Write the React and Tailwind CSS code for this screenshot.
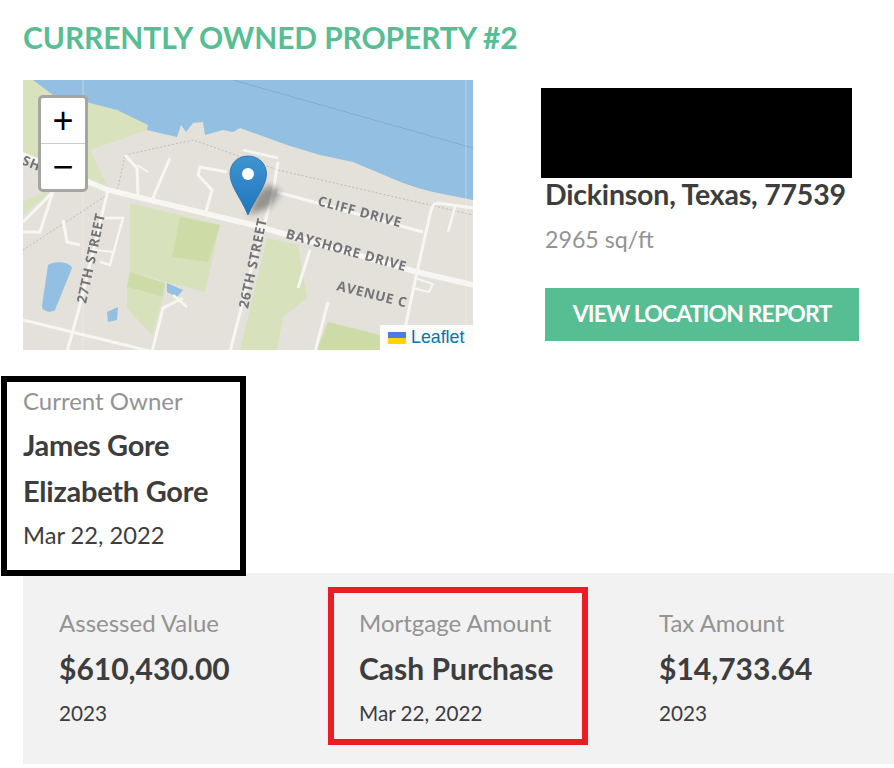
const roads = [
  ["M-5 73L85 110L230 145L394 192L455 206", 5.500],
  ["M254 112L400 152", 3],
  ["M450 128L415 123Q410 123 408 130L394 192L377 272", 3],
  ["M432 127L425 152", 2.500],
  ["M255 82L250 112L242 142L230 182L207 272", 3],
  ["M220 70L255 78", 2.500],
  ["M204 92L177 87L175 95L189 110L182 135", 3],
  ["M147 78L129 120", 3],
  ["M102 75L114 88L115 115", 3],
  ["M114 85L125 92", 2],
  ["M85 110L57 225L44 272", 3],
  ["M30 112L0 142", 3],
  ["M0 152L17 152L30 112", 3],
  ["M40 140L44 162L57 165", 3],
  ["M82 138L100 138L87 185L77 182", 2.500],
  ["M72 170L90 172", 2],
  ["M0 240L90 262L130 272", 3],
  ["M160 218L140 228L129 272", 3],
  ["M150 215L164 227", 2.500],
  ["M287 170L275 208", 3],
  ["M305 222L292 272", 3],
  ["M392 198L410 204L406 212L390 208", 2],
  ["M60 0L60 270", 1],
  ["M443 0L443 270", 1],
];

function MapArt() {
  return (
    <svg viewBox="0 0 450 270" className="block h-full w-full blur-[0.6px]">
      <defs>
        <linearGradient id="pin" x1="0" y1="0" x2="0" y2="1">
          <stop offset="0" stopColor="#3f94d0" />
          <stop offset="1" stopColor="#1f76bd" />
        </linearGradient>
      </defs>
      <rect width="450" height="270" fill="#e3e1d9" />
      <path d="M0 0H10L30 15L67 23L94 30L125 45L124 50L67 70L85 108L0 75Z" fill="#d8e2bd" />
      <path d="M0 122L30 108L20 118L0 135Z" fill="#d8e2bd" />
      <path d="M10 0L30 15L67 23L94 30L125 45L124 50L154 57L158 45L163 52L170 43L180 42L182 55L200 50L210 52L217 48L264 65L297 75L330 82L380 103L395 108L410 112L450 120V0Z" fill="#92bfe2" />
      <path d="M107 123L197 145L182 212L107 192Z" fill="#d7e2bd" />
      <path d="M157 137L197 145L185 182L149 177Z" fill="#cddca6" />
      <path d="M107 192L142 203L140 217L104 207Z" fill="#cddca6" />
      <path d="M104 207L140 217L137 228L129 255L104 228Z" fill="#d7e2bd" />
      <path d="M244 158L275 165L284 218L260 237L254 270H217Z" fill="#d7e2bd" />
      <path d="M305 242L357 255V270H294Z" fill="#cddca6" />
      <path d="M25 185C32 180 48 182 49 188L32 230C28 233 19 232 19 226Z" fill="#92bfe2" />
      <path d="M84 232L95 227L94 240L85 242Z" fill="#92bfe2" />
      <path d="M144 203L160 210L154 217L144 212Z" fill="#92bfe2" />
      <path d="M102 75L170 60L255 90L450 135" fill="none" stroke="#bdbbb3" strokeWidth="1" strokeDasharray="2 2" />
      <path d="M210 0L450 68" fill="none" stroke="#86abc8" strokeWidth="1" />
      <path d="M0 170L95 108L102 75" fill="none" stroke="#bdbbb3" strokeWidth="1" strokeDasharray="2 2" />
      {roads.map(([d, w]) => (
        <path key={d} d={d} fill="none" stroke="#f7f6f2" strokeWidth={w} strokeOpacity={w === 1 ? 0.45 : 1} />
      ))}
      <g fill="#737378" fontFamily="'Open Sans', sans-serif" fontWeight="700" fontSize="13.500" letterSpacing="0.7">
        <text transform="translate(294 125) rotate(15)">CLIFF DRIVE</text>
        <text transform="translate(262 158) rotate(15.500)">BAYSHORE DRIVE</text>
        <text transform="translate(313 210) rotate(14)">AVENUE C</text>
        <text transform="translate(63 224) rotate(-78)">27TH STREET</text>
        <text transform="translate(225 229) rotate(-78)">26TH STREET</text>
        <text transform="translate(-2 84) rotate(22)">SHO</text>
      </g>
      <path d="M225 135L246 128L258 112L246 104L234 114Z" fill="#333" opacity="0.45" className="blur-[3px]" />
      <path d="M225 135C218 118 207 106 207 94C207 83 215 76 225 76C235 76 243.500 83 243.500 94C243.500 106 232 118 225 135Z" fill="url(#pin)" stroke="#2a6fa8" strokeWidth="0.8" />
      <circle cx="225" cy="94" r="6" fill="#fff" />
    </svg>
  );
}

function Stat({ label, value, date }) {
  return (
    <div>
      <p className="text-[24px] leading-[30px] text-[#939393]">{label}</p>
      <p className="mt-[15px] text-[30px] leading-[30px] font-bold text-[#3d3d3d]">{value}</p>
      <p className="mt-[15px] text-[20.700px] leading-[30px] text-[#3d3d3d]">{date}</p>
    </div>
  );
}

export default function App() {
  return (
    <div className="relative h-[768px] w-[894px] overflow-hidden bg-white font-['Lato',sans-serif]">
      <div className="pt-[17px] pl-[23px]">
        <h1 className="text-[30px] leading-[40px] font-bold tracking-[-0.12px] text-[#57bd92]">CURRENTLY OWNED PROPERTY #2</h1>
        <div className="mt-[23px] flex">
          <div className="relative h-[270px] w-[450px] overflow-hidden">
            <MapArt />
            <div className="absolute top-[15px] left-[15px] w-[50px] overflow-hidden rounded-[5px] border-[3px] border-[#a3a7a0] bg-white">
              <div className="flex h-[46px] items-center justify-center border-b border-[#cccccc] pt-[6px] font-['Liberation_Mono',monospace] text-[36px] leading-none text-black">+</div>
              <div className="flex h-[45px] items-center justify-center pt-[6px] font-['Liberation_Mono',monospace] text-[36px] leading-none text-black">−</div>
            </div>
            <div className="absolute right-0 bottom-0 flex h-[25px] w-[93px] items-center gap-[5px] bg-white/90 pl-[8px] font-['Liberation_Sans',sans-serif] text-[17.800px] text-[#0078a8]">
              <span className="flex h-[12px] w-[18px] flex-col">
                <span className="h-[6px] bg-[#4c7be1]" />
                <span className="h-[6px] bg-[#ffd500]" />
              </span>
              Leaflet
            </div>
          </div>
          <div className="ml-[72px]">
            <div className="mt-[8px] -ml-[4px] h-[90px] w-[311px] bg-black" />
            <p className="text-[28.500px] leading-[32px] font-bold tracking-[-0.2px] text-[#3d3d3d]">Dickinson, Texas, 77539</p>
            <p className="mt-[13px] text-[23.200px] leading-[32px] text-[#939393]">2965 sq/ft</p>
            <button className="mt-[33px] block h-[53px] w-[314px] bg-[#57bd92] pb-[2px] text-[23px] font-bold tracking-[-0.9px] text-white">VIEW LOCATION REPORT</button>
          </div>
        </div>
        <div className="mt-[33px] h-[190px]">
          <p className="text-[24px] leading-[36px] text-[#939393]">Current Owner</p>
          <p className="mt-[3px] text-[29px] leading-[46px] font-bold tracking-[-0.35px] text-[#3d3d3d]">James Gore</p>
          <p className="text-[29px] leading-[46px] font-bold tracking-[-0.25px] text-[#3d3d3d]">Elizabeth Gore</p>
          <p className="mt-[3px] text-[23.700px] leading-[36px] text-[#3d3d3d]">Mar 22, 2022</p>
        </div>
        <div className="grid h-[191px] grid-cols-[300px_300px_1fr] bg-[#f2f2f2] pt-[35px] pl-[36px]">
          <Stat label="Assessed Value" value="$610,430.00" date="2023" />
          <Stat label="Mortgage Amount" value="Cash Purchase" date="Mar 22, 2022" />
          <Stat label="Tax Amount" value="$14,733.64" date="2023" />
        </div>
      </div>
      <div className="absolute top-[376px] left-[1px] h-[200px] w-[245px] border-[6px] border-black" />
      <div className="absolute top-[587px] left-[328px] h-[158px] w-[260px] border-[6px] border-[#ed1c24]" />
    </div>
  );
}
